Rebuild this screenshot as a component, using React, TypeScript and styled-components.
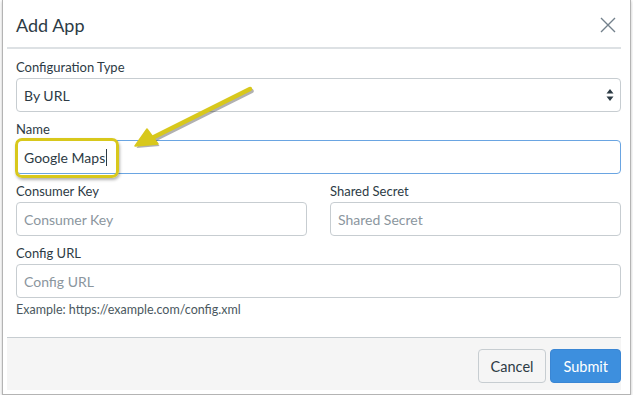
import React from "react";
import styled, { createGlobalStyle } from "styled-components";

const GlobalStyle = createGlobalStyle`
    html, body {
        margin     : 0;
        padding    : 0;
        background : #fff;
        font-family: Lato, "Open Sans", "Liberation Sans", sans-serif;
        color      : #2d3b45;
    }
`;

const Frame = styled.div`
    position     : relative;
    margin-left  : 2px;
    width        : 629px;
    height       : 395px;
    box-sizing   : border-box;
    border       : 1px solid #b4b4b4;
    border-top   : none;
    box-shadow   : 0 1px 3px rgba(0, 0, 0, .25);
    background   : #fff;
    padding      : 0 0 0 4px;
`;

const Dialog = styled.div`
    width          : 614px;
    height         : 390px;
    display        : flex;
    flex-direction : column;
`;

const Header = styled.div`
    height          : 47px;
    display         : flex;
    align-items     : center;
    justify-content : space-between;
    padding         : 0 3px 0 9px;
    border-bottom   : 2px solid #dde1e4;
`;

const Title = styled.h2`
    margin      : 0;
    font-size   : 18px;
    font-weight : 400;
    padding-top : 2px;
`;

const CloseButton = styled.button`
    border     : none;
    background : none;
    padding    : 0;
    width      : 20px;
    height     : 20px;
    display    : flex;
    align-items: center;
    justify-content: center;
    margin-top : 2px;
`;

const Body = styled.div`
    flex    : 1;
    padding : 7px 0 0 9px;
`;

const Field = styled.div`
    margin-bottom : 6px;
`;

const Label = styled.label`
    display     : block;
    font-size   : 13px;
    line-height : 22px;
`;

const inputBox = `
    box-sizing    : border-box;
    width         : 100%;
    height        : 34px;
    border        : 1px solid #c7cdd1;
    border-radius : 4px;
    background    : #fff;
    padding       : 0 7px;
    font-family   : Lato, "Open Sans", "Liberation Sans", sans-serif;
    font-size     : 14px;
    color         : #2d3b45;
`;

const Input = styled.input`
    ${inputBox}
    display : block;
    outline : none;
    &::placeholder {
        color : #8b969e;
    }
`;

const SelectBox = styled.div`
    ${inputBox}
    display         : flex;
    align-items     : center;
    justify-content : space-between;
    padding-right   : 6px;
`;

const FocusedInput = styled.div<{ $focused?: boolean }>`
    ${inputBox}
    display      : flex;
    align-items  : center;
    border-color : ${p => (p.$focused ? "#6aa5e2" : "#c7cdd1")};
`;

const Caret = styled.span`
    display     : inline-block;
    width       : 1px;
    height      : 17px;
    background  : #2d3b45;
    margin-left : 1px;
`;

const Row = styled.div`
    display               : grid;
    grid-template-columns : 1fr 1fr;
    column-gap            : 23px;
`;

const Hint = styled.div`
    font-size   : 12.5px;
    line-height : 17px;
    margin-top  : -3px;
    color       : #4a5860;
`;

const Footer = styled.div`
    height          : 53px;
    box-sizing      : border-box;
    border-top      : 1px solid #c7cdd1;
    background      : #f5f5f5;
    display         : flex;
    justify-content : flex-end;
    align-items     : flex-start;
    padding-top     : 11px;
    gap             : 4px;
`;

const Button = styled.button<{ $primary?: boolean }>`
    height        : 34px;
    box-sizing    : border-box;
    padding       : 0 12px;
    border-radius : 4px;
    font-family   : Lato, "Open Sans", "Liberation Sans", sans-serif;
    font-size     : 14.5px;
    border        : 1px solid ${p => (p.$primary ? "#3a86d4" : "#c7cdd1")};
    background    : ${p => (p.$primary ? "#3d8fde" : "#f5f5f5")};
    color         : ${p => (p.$primary ? "#fff" : "#2d3b45")};
`;

const Highlight = styled.div`
    position      : absolute;
    left          : 12px;
    top           : 138px;
    width         : 104px;
    height        : 40px;
    box-sizing    : border-box;
    border        : 3px solid #d8c81c;
    border-radius : 7px;
    box-shadow    : 1px 2px 3px rgba(0, 0, 0, .3);
    pointer-events: none;
`;

const Annotation = styled.svg`
    position       : absolute;
    left           : 0;
    top            : 0;
    pointer-events : none;
`;

const App = () => {
    return (
        <>
            <GlobalStyle />
            <Frame>
                <Dialog>
                    <Header>
                        <Title>Add App</Title>
                        <CloseButton aria-label="Close">
                            <svg width="16" height="16" viewBox="0 0 16 16">
                                <path d="M1 1 L15 15 M15 1 L1 15" stroke="#73818c" strokeWidth="1.4" fill="none" />
                            </svg>
                        </CloseButton>
                    </Header>
                    <Body>
                        <Field>
                            <Label>Configuration Type</Label>
                            <SelectBox>
                                <span>By URL</span>
                                <svg width="8" height="14" viewBox="0 0 8 14">
                                    <path d="M4 1 L7.5 5.5 L0.5 5.5 Z M4 13 L7.5 8.5 L0.5 8.5 Z" fill="#2d3b45" />
                                </svg>
                            </SelectBox>
                        </Field>
                        <Field>
                            <Label>Name</Label>
                            <FocusedInput $focused>
                                Google Maps<Caret />
                            </FocusedInput>
                        </Field>
                        <Row>
                            <Field>
                                <Label>Consumer Key</Label>
                                <Input placeholder="Consumer Key" />
                            </Field>
                            <Field>
                                <Label>Shared Secret</Label>
                                <Input placeholder="Shared Secret" />
                            </Field>
                        </Row>
                        <Field>
                            <Label>Config URL</Label>
                            <Input placeholder="Config URL" />
                        </Field>
                        <Hint>Example: https://example.com/config.xml</Hint>
                    </Body>
                    <Footer>
                        <Button>Cancel</Button>
                        <Button $primary>Submit</Button>
                    </Footer>
                </Dialog>
                <Highlight />
                <Annotation width="629" height="395" viewBox="3 0 629 395">
                    <g transform="translate(1.5 2)" opacity="0.3">
                        <line x1="250" y1="89" x2="152" y2="138" stroke="#000" strokeWidth="4.5" strokeLinecap="round" />
                        <path d="M135 146 L147 129 L158 144 Z" fill="#000" />
                    </g>
                    <line x1="250" y1="89" x2="152" y2="138" stroke="#d8c81c" strokeWidth="4.5" strokeLinecap="round" />
                    <path d="M135 146 L147 129 L158 144 Z" fill="#d8c81c" stroke="#d8c81c" strokeWidth="1.5" strokeLinejoin="round" />
                </Annotation>
            </Frame>
        </>
    );
};

export default App;
